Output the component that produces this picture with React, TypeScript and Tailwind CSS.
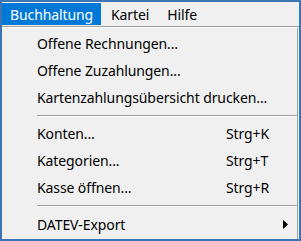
import React from "react";

const font = { fontFamily: '"Noto Sans", "Open Sans", sans-serif' };

function Item({ label, shortcut, arrow }: { label: string; shortcut?: string; arrow?: boolean }) {
  return (
    <div className="flex h-[27px] items-center pl-[35px] pr-[5px] whitespace-nowrap">
      <span className="flex-1">{label}</span>
      {shortcut && <span className="w-[66px] text-left">{shortcut}</span>}
      {arrow && (
        <svg width="5" height="9" viewBox="0 0 5 9" className="mr-[4px]">
          <path d="M0 0 L5 4.5 L0 9 Z" fill="#000" />
        </svg>
      )}
    </div>
  );
}

function Sep({ h }: { h: string }) {
  return (
    <div className={`flex items-center pl-[35px] ${h}`}>
      <div className="h-[2px] w-full border-t border-[#a0a0a0] border-b-white border-b" />
    </div>
  );
}

export default function App() {
  return (
    <div
      className="w-[301px] h-[241px] border-2 border-[#3c74b6] bg-[#f0f0f0] text-[14px] tracking-[-0.1px] text-black flex flex-col overflow-hidden"
      style={font}
    >
      <div className="flex h-[25px] items-stretch border-b border-[#a0a0a0] shrink-0 pt-[1px] pb-[1px]">
        <div className="bg-[#0078d7] text-white px-[8px] flex items-center w-[99px]">Buchhaltung</div>
        <div className="pl-[10px] pr-[8px] flex items-center">Kartei</div>
        <div className="px-[10px] flex items-center">Hilfe</div>
      </div>
      <div className="flex-1 border-t border-white border-r border-r-[#a0a0a0] mr-[1px] pt-[2px]">
        <Item label="Offene Rechnungen..." />
        <Item label="Offene Zuzahlungen..." />
        <Item label="Kartenzahlungsübersicht drucken..." />
        <Sep h="h-[9px]" />
        <Item label="Konten..." shortcut="Strg+K" />
        <Item label="Kategorien..." shortcut="Strg+T" />
        <Item label="Kasse öffnen..." shortcut="Strg+R" />
        <Sep h="h-[10px]" />
        <Item label="DATEV-Export" arrow />
      </div>
    </div>
  );
}
